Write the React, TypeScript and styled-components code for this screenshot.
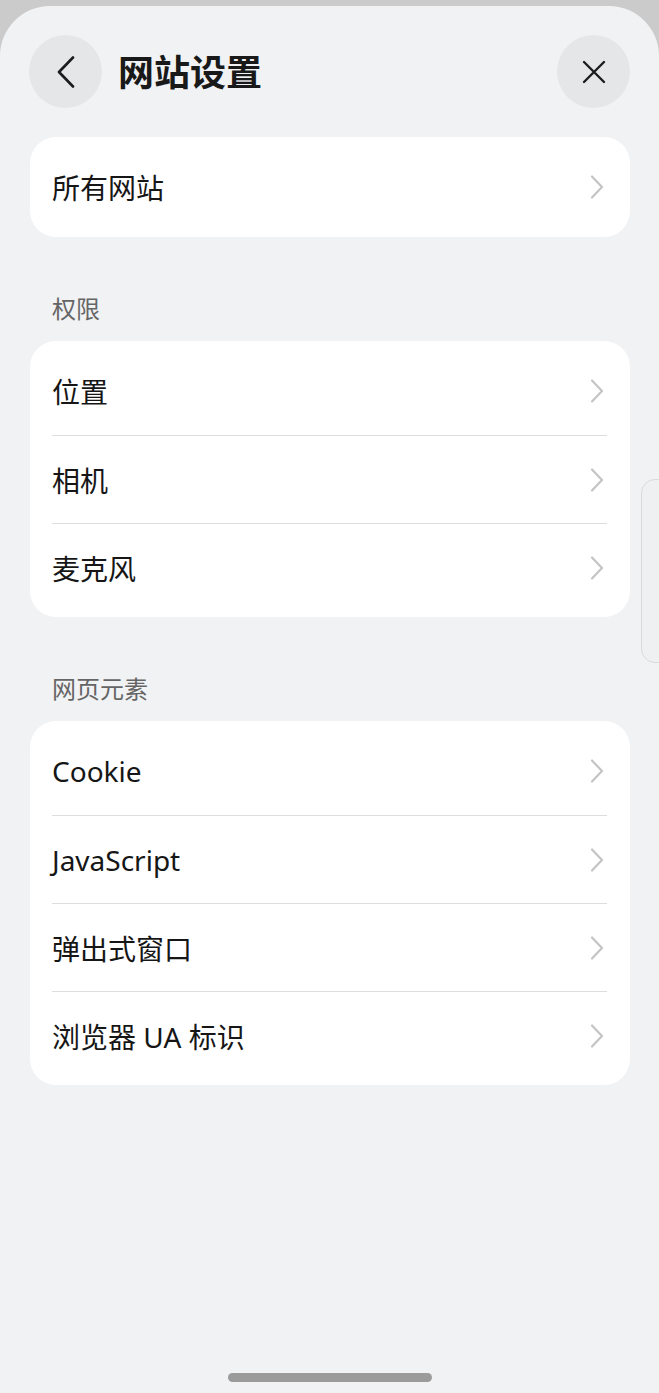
import React from "react";
import styled, { createGlobalStyle } from "styled-components";

const GlobalStyle = createGlobalStyle`
  html, body {
    margin: 0;
    padding: 0;
    background: #cbcbcb;
  }
  body {
    font-family: "Noto Sans", "Noto Sans CJK SC", sans-serif;
    -webkit-font-smoothing: antialiased;
  }
`;

const Sheet = styled.div`
  position: relative;
  margin-top: 6px;
  height: 1387px;
  background: #f1f2f4;
  border-radius: 50px 50px 0 0;
  display: flex;
  flex-direction: column;
  overflow: hidden;
`;

const Header = styled.div`
  display: flex;
  align-items: center;
  padding: 29px 29px 0 29px;
  height: 73px;
`;

const RoundButton = styled.button`
  width: 73px;
  height: 73px;
  border-radius: 50%;
  border: none;
  background: #e5e6e8;
  display: flex;
  align-items: center;
  justify-content: center;
  padding: 0;
  flex-shrink: 0;
`;

const Title = styled.h1`
  flex: 1;
  margin: -4px 0 0 16px;
  font-family: "Noto Sans CJK SC", sans-serif;
  font-size: 36px;
  font-weight: 700;
  color: #191919;
  line-height: 1;
`;

const Content = styled.div`
  padding: 29px 29px 0 30px;
  display: flex;
  flex-direction: column;
`;

const SectionLabel = styled.div`
  padding: 55px 22px 17px;
  font-family: "Noto Sans CJK SC", sans-serif;
  font-size: 24px;
  line-height: 32px;
  color: #656565;
`;

const Card = styled.div`
  background: #ffffff;
  border-radius: 26px;
  padding: 6px 0;
`;

const Row = styled.div<{ $divider?: boolean }>`
  display: flex;
  align-items: center;
  height: 88px;
  margin: 0 23px 0 22px;
  padding-right: 3px;
  border-top: ${(p) => (p.$divider ? "1px solid #dedede" : "none")};
  box-sizing: border-box;
`;

const RowText = styled.span`
  flex: 1;
  font-size: 28px;
  color: #161616;
`;

const SideTab = styled.div`
  position: absolute;
  left: 641px;
  top: 473px;
  width: 36px;
  height: 182px;
  border: 1px solid #d9dadc;
  border-radius: 14px;
  background: #eff0f2;
`;

const HomeBar = styled.div`
  margin: auto auto 11px;
  width: 204px;
  height: 9px;
  border-radius: 5px;
  background: #9b9b9b;
`;

const Chevron = () => (
  <svg width="14" height="24" viewBox="0 0 14 24" fill="none">
    <path d="M2 1.5 L12 12 L2 22.5" stroke="#c4c4c4" strokeWidth="2.2" strokeLinecap="round" strokeLinejoin="round" />
  </svg>
);

const BackIcon = () => (
  <svg width="18" height="32" viewBox="0 0 18 32" fill="none">
    <path d="M16 1.5 L2 16 L16 30.5" stroke="#1c1c1c" strokeWidth="2.6" strokeLinecap="round" strokeLinejoin="round" />
  </svg>
);

const CloseIcon = () => (
  <svg width="24" height="24" viewBox="0 0 24 24" fill="none">
    <path d="M2 2 L22 22 M22 2 L2 22" stroke="#1c1c1c" strokeWidth="2.4" strokeLinecap="round" />
  </svg>
);

const sections = [
  { label: "权限", items: ["位置", "相机", "麦克风"] },
  { label: "网页元素", items: ["Cookie", "JavaScript", "弹出式窗口", "浏览器 UA 标识"] },
];

const App = () => {
  return (
    <>
      <GlobalStyle />
      <Sheet>
        <Header>
          <RoundButton aria-label="back">
            <BackIcon />
          </RoundButton>
          <Title>网站设置</Title>
          <RoundButton aria-label="close">
            <CloseIcon />
          </RoundButton>
        </Header>
        <Content>
          <Card>
            <Row>
              <RowText>所有网站</RowText>
              <Chevron />
            </Row>
          </Card>
          {sections.map((s) => (
            <React.Fragment key={s.label}>
              <SectionLabel>{s.label}</SectionLabel>
              <Card>
                {s.items.map((item, i) => (
                  <Row key={item} $divider={i > 0}>
                    <RowText>{item}</RowText>
                    <Chevron />
                  </Row>
                ))}
              </Card>
            </React.Fragment>
          ))}
        </Content>
        <SideTab />
        <HomeBar />
      </Sheet>
    </>
  );
};

export default App;
